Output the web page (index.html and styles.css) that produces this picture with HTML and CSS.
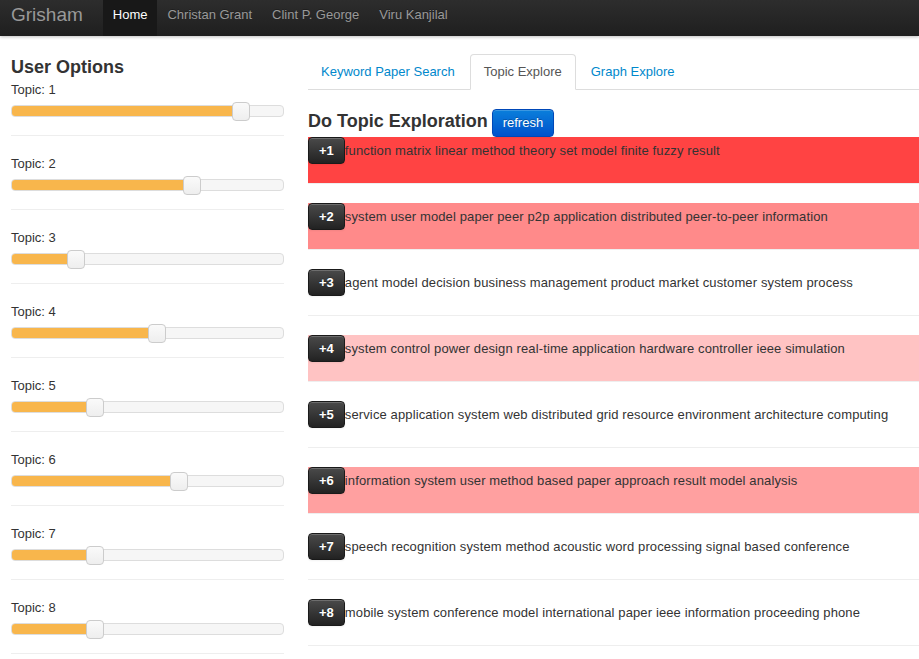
FILE: index.html
```html
<!DOCTYPE html>
<html lang="en">
<head>
<meta charset="utf-8">
<title>Grisham</title>
<link rel="stylesheet" href="styles.css">
</head>
<body>
<header class="navbar">
  <a class="brand" href="#">Grisham</a>
  <nav class="nav">
    <a class="nav-link active" href="#">Home</a>
    <a class="nav-link" href="#">Christan Grant</a>
    <a class="nav-link" href="#">Clint P. George</a>
    <a class="nav-link" href="#">Viru Kanjilal</a>
  </nav>
</header>

<div class="page">
  <aside class="sidebar">
    <h3 class="side-title">User Options</h3>
    <div class="topic">
      <div class="topic-label">Topic: 1</div>
      <div class="slider"><div class="fill" style="width:229px"></div><div class="thumb" style="left:220px"></div></div>
    </div>
    <div class="topic">
      <div class="topic-label">Topic: 2</div>
      <div class="slider"><div class="fill" style="width:180px"></div><div class="thumb" style="left:171px"></div></div>
    </div>
    <div class="topic">
      <div class="topic-label">Topic: 3</div>
      <div class="slider"><div class="fill" style="width:64px"></div><div class="thumb" style="left:55px"></div></div>
    </div>
    <div class="topic">
      <div class="topic-label">Topic: 4</div>
      <div class="slider"><div class="fill" style="width:145px"></div><div class="thumb" style="left:136px"></div></div>
    </div>
    <div class="topic">
      <div class="topic-label">Topic: 5</div>
      <div class="slider"><div class="fill" style="width:83px"></div><div class="thumb" style="left:74px"></div></div>
    </div>
    <div class="topic">
      <div class="topic-label">Topic: 6</div>
      <div class="slider"><div class="fill" style="width:167px"></div><div class="thumb" style="left:158px"></div></div>
    </div>
    <div class="topic">
      <div class="topic-label">Topic: 7</div>
      <div class="slider"><div class="fill" style="width:83px"></div><div class="thumb" style="left:74px"></div></div>
    </div>
    <div class="topic">
      <div class="topic-label">Topic: 8</div>
      <div class="slider"><div class="fill" style="width:83px"></div><div class="thumb" style="left:74px"></div></div>
    </div>
  </aside>

  <main class="main">
    <ul class="tabs">
      <li class="tab"><a href="#">Keyword Paper Search</a></li>
      <li class="tab active"><a href="#">Topic Explore</a></li>
      <li class="tab"><a href="#">Graph Explore</a></li>
    </ul>

    <h3 class="explore-title">Do Topic Exploration <button class="btn btn-primary">refresh</button></h3>

    <div class="rows">
      <div class="row" style="background:#ff4343"><button class="btn btn-inverse">+1</button><span class="row-text">function matrix linear method theory set model finite fuzzy result</span></div>
      <div class="row" style="background:#ff8a8a"><button class="btn btn-inverse">+2</button><span class="row-text">system user model paper peer p2p application distributed peer-to-peer information</span></div>
      <div class="row" style="background:#ffffff"><button class="btn btn-inverse">+3</button><span class="row-text">agent model decision business management product market customer system process</span></div>
      <div class="row" style="background:#ffc3c3"><button class="btn btn-inverse">+4</button><span class="row-text">system control power design real-time application hardware controller ieee simulation</span></div>
      <div class="row" style="background:#ffffff"><button class="btn btn-inverse">+5</button><span class="row-text">service application system web distributed grid resource environment architecture computing</span></div>
      <div class="row" style="background:#ffa0a0"><button class="btn btn-inverse">+6</button><span class="row-text">information system user method based paper approach result model analysis</span></div>
      <div class="row" style="background:#ffffff"><button class="btn btn-inverse">+7</button><span class="row-text">speech recognition system method acoustic word processing signal based conference</span></div>
      <div class="row" style="background:#ffffff"><button class="btn btn-inverse">+8</button><span class="row-text">mobile system conference model international paper ieee information proceeding phone</span></div>
    </div>
  </main>
</div>
</body>
</html>
```

FILE: styles.css
```css
* { box-sizing: border-box; }

html, body {
  margin: 0;
  padding: 0;
}

body {
  font-family: "Liberation Sans", Arial, Helvetica, sans-serif;
  font-size: 13px;
  line-height: 18px;
  color: #333333;
  background: #ffffff;
}

a { text-decoration: none; }

/* Navbar */
.navbar {
  display: flex;
  align-items: flex-start;
  height: 36px;
  background: linear-gradient(to bottom, #2d2d2d, #1f1f1f);
  box-shadow: 0 1px 3px rgba(0, 0, 0, 0.25);
}

.brand {
  display: block;
  padding: 5px 20px 12px 11px;
  font-size: 19px;
  line-height: 19px;
  color: #999999;
}

.nav {
  display: flex;
}

.nav-link {
  display: block;
  padding: 6px 10px 12px;
  line-height: 18px;
  color: #999999;
  text-shadow: 0 -1px 0 rgba(0, 0, 0, 0.25);
}

.nav-link.active {
  color: #ffffff;
  background: #181818;
}

/* Page layout */
.page {
  display: flex;
  gap: 24px;
  padding: 18px 0 0 11px;
}

.sidebar {
  flex: 0 0 273px;
  width: 273px;
}

.main {
  flex: 1;
  min-width: 0;
}

/* Sidebar */
.side-title {
  margin: 0;
  font-size: 18px;
  line-height: 27px;
  font-weight: bold;
  color: #333333;
}

.topic {
  padding-bottom: 18px;
  border-bottom: 1px solid #eeeeee;
  margin-bottom: 19px;
}

.topic-label {
  line-height: 18px;
}

.slider {
  position: relative;
  margin-top: 6px;
  height: 12px;
  background: #f6f6f6;
  border: 1px solid #dddddd;
  border-radius: 4px;
}

.fill {
  height: 10px;
  background: #f8b64c;
  border-radius: 3px 0 0 3px;
}

.thumb {
  position: absolute;
  top: -4px;
  width: 18px;
  height: 19px;
  background: linear-gradient(to bottom, #fafafa, #eeeeee);
  border: 1px solid #cccccc;
  border-radius: 4px;
}

/* Tabs */
.tabs {
  display: flex;
  list-style: none;
  margin: 0 0 18px;
  padding: 0;
  border-bottom: 1px solid #dddddd;
}

.tab {
  margin-bottom: -1px;
  margin-right: 2px;
}

.tab a {
  display: block;
  padding: 8px 12px;
  line-height: 18px;
  border: 1px solid transparent;
  border-radius: 4px 4px 0 0;
  color: #0088cc;
}

.tab.active a {
  padding: 8px 13px;
  color: #555555;
  background: #ffffff;
  border-color: #dddddd #dddddd transparent;
}

/* Explore heading */
.explore-title {
  margin: 2px 0 0;
  font-size: 18px;
  line-height: 27px;
  font-weight: bold;
  color: #333333;
}

.btn {
  display: inline-block;
  font-family: inherit;
  font-size: 13px;
  line-height: 18px;
  font-weight: normal;
  padding: 4px 10px;
  margin: 0;
  border-radius: 4px;
  cursor: pointer;
  vertical-align: baseline;
  color: #ffffff;
  text-shadow: 0 -1px 0 rgba(0, 0, 0, 0.25);
  box-shadow: inset 0 1px 0 rgba(255, 255, 255, 0.2), 0 1px 2px rgba(0, 0, 0, 0.05);
}

.btn-primary {
  margin-left: -1px;
  background: linear-gradient(to bottom, #0a7fdb, #0052cc);
  border: 1px solid #0048b8;
}

.btn-inverse {
  padding: 4px 10px 3px;
  font-weight: bold;
  background: linear-gradient(to bottom, #4a4a4a, #222222);
  border: 1px solid #1a1a1a;
}

/* Topic rows */
.row {
  height: 47px;
  border-bottom: 1px solid #eeeeee;
  margin-bottom: 19px;
  line-height: 18px;
  white-space: nowrap;
}

.row-text {
  letter-spacing: 0.12px;
}
```
